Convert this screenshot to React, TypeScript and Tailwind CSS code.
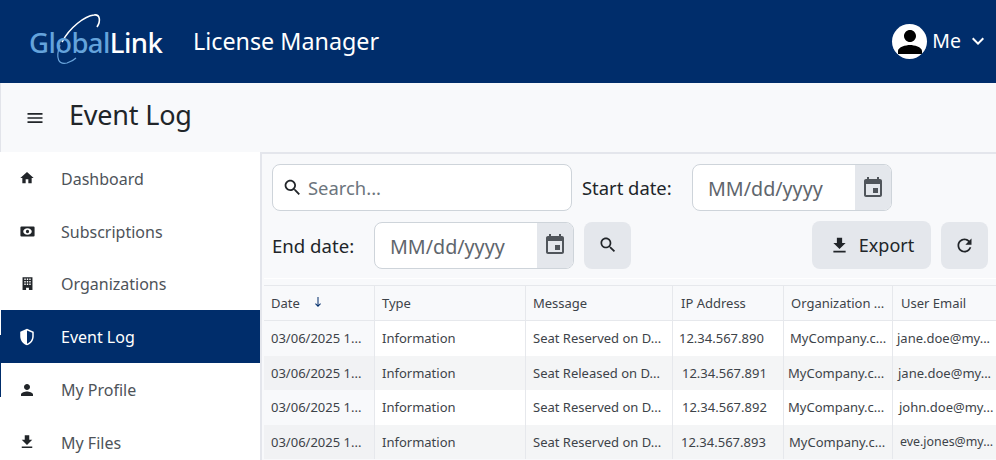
import type { ReactNode } from "react";

const Icon = ({ d, className }: { d: string; className: string }) => (
  <svg viewBox="0 0 24 24" fill="currentColor" fillRule="evenodd" className={className}>
    <path d={d} />
  </svg>
);

const icons = {
  home: "M10 20v-6h4v6h5v-8h3L12 3 2 12h3v8z",
  subs: "M3.5 5h17A1.5 1.5 0 0 1 22 6.5v11a1.5 1.5 0 0 1-1.5 1.5h-17A1.5 1.5 0 0 1 2 17.5v-11A1.5 1.5 0 0 1 3.5 5zM12 7.5c-3.3 0-6 2-6 4.5s2.700 4.500 6 4.500 6-2 6-4.500-2.700-4.500-6-4.500zM12 9.700a2.300 2.300 0 1 1 0 4.600 2.300 2.300 0 0 1 0-4.600z",
  org: "M5 3h14v18h-5v-3h-4v3H5V3zm2.500 2v2h2V5h-2zm3.500 0v2h2V5h-2zm3.500 0v2h2V5h-2zm-7 3.500v2h2v-2h-2zm3.500 0v2h2v-2h-2zm3.500 0v2h2v-2h-2zm-7 3.500v2h2v-2h-2zm3.500 0v2h2v-2h-2zm3.500 0v2h2v-2h-2z",
  shield:
    "M12 1L3 5v6c0 5.55 3.84 10.74 9 12 5.16-1.26 9-6.45 9-12V5l-9-4zm0 2.19l7 3.11V11c0 4.52-2.98 8.69-7 9.93V3.19z",
  person:
    "M12 12c2.21 0 4-1.79 4-4s-1.79-4-4-4-4 1.79-4 4 1.79 4 4 4zm0 2c-2.67 0-8 1.34-8 4v2h16v-2c0-2.66-5.33-4-8-4z",
  download: "M19 9h-4V3H9v6H5l7 7 7-7zM5 18v2h14v-2H5z",
  menu: "M3 18h18v-2H3v2zm0-5h18v-2H3v2zm0-7v2h18V6H3z",
  search:
    "M15.5 14h-.79l-.28-.27C15.41 12.59 16 11.11 16 9.5 16 5.91 13.09 3 9.5 3S3 5.91 3 9.5 5.91 16 9.5 16c1.61 0 3.09-.59 4.23-1.57l.27.28v.79l5 4.99L20.49 19l-4.99-5zm-6 0C7.01 14 5 11.99 5 9.5S7.01 5 9.5 5 14 7.01 14 9.5 11.99 14 9.5 14z",
  refresh:
    "M17.65 6.35C16.2 4.9 14.21 4 12 4c-4.42 0-7.99 3.58-7.99 8s3.57 8 7.99 8c3.73 0 6.84-2.55 7.73-6h-2.08c-.82 2.33-3.04 4-5.65 4-3.31 0-6-2.69-6-6s2.69-6 6-6c1.66 0 3.14.69 4.22 1.78L13 11h7V4l-2.35 2.35z",
  event:
    "M17 12h-5v5h5v-5zM16 1v2H8V1H6v2H5c-1.11 0-1.99.9-1.99 2L3 19c0 1.1.89 2 2 2h14c1.1 0 2-.9 2-2V5c0-1.1-.9-2-2-2h-1V1h-2zm3 18H5V8h14v11z",
  arrow: "M11 2h2v16l3.400-3.400L17.800 16 12 22l-5.800-6 1.400-1.400L11 18z",
  chevron: "M16.59 8.59L12 13.17 7.41 8.59 6 10l6 6 6-6z",
};

const navItems = [
  { label: "Dashboard", icon: icons.home, size: "h-[16px] w-[16px]" },
  { label: "Subscriptions", icon: icons.subs, size: "h-[17px] w-[17px]" },
  { label: "Organizations", icon: icons.org, size: "h-[17px] w-[17px]" },
  { label: "Event Log", icon: icons.shield, size: "h-[18px] w-[18px]", active: true },
  { label: "My Profile", icon: icons.person, size: "h-[18px] w-[18px]" },
  { label: "My Files", icon: icons.download, size: "h-[18px] w-[18px]" },
];

const rows = [
  { message: "Seat Reserved on D...", ip: "12.34.567.890", email: "jane.doe@my...", ipPad: "pl-[6px]", orgPad: "pl-[6px]", emailPad: "pl-[4px]" },
  { message: "Seat Released on D...", ip: "12.34.567.891", email: "jane.doe@my...", ipPad: "pl-[9px]", orgPad: "pl-[4px]", emailPad: "pl-[5px]" },
  { message: "Seat Reserved on D...", ip: "12.34.567.892", email: "john.doe@my...", ipPad: "pl-[9px]", orgPad: "pl-[4px]", emailPad: "pl-[6px]" },
  { message: "Seat Reserved on D...", ip: "12.34.567.893", email: "eve.jones@my...", ipPad: "pl-[8px]", orgPad: "pl-[5px]", emailPad: "pl-[7px] text-[12.4px]" },
];

const DateInput = () => (
  <div className="flex h-[47px] w-[200px] shrink-0 overflow-hidden rounded-lg border border-[#ced4da] bg-white">
    <span className="flex-1 pl-[15px] pt-[1px] text-[19.7px] leading-[45px] text-[#5f666d]">MM/dd/yyyy</span>
    <span className="flex w-[36px] items-center justify-center bg-[#e4e7ec] text-[#50555b]">
      <Icon d={icons.event} className="h-[24px] w-[24px]" />
    </span>
  </div>
);

const Th = ({ className, children }: { className: string; children: ReactNode }) => (
  <div className={`flex h-full shrink-0 items-center border-r border-[#e6e8ec] pt-[1px] text-[13px] text-[#3d4349] ${className}`}>
    {children}
  </div>
);

export default function App() {
  return (
    <div className="flex h-[460px] w-[996px] flex-col overflow-hidden bg-white font-['Noto_Sans','Open_Sans',sans-serif]">
      <header className="flex h-[83px] shrink-0 items-center bg-[#002d6b] pl-[29px] pr-[6px] text-white">
        <div className="relative w-[164px] pt-[3px]">
          <svg viewBox="0 0 55 60" fill="none" className="absolute left-[21px] top-[-10px] h-[60px] w-[55px]">
            <path d="M12 33C20 18 35 7 44 6C50 5 51 12 47 18" stroke="white" strokeWidth="1.6" />
            <path d="M10 36C5 50 9 56 17 54C20 53 24 51 26 49" stroke="#6aa5dc" strokeWidth="1.2" />
          </svg>
          <span className="relative text-[27.5px] font-medium tracking-[-0.6px] text-[#64a3dc]">
            Global<span className="text-white">Link</span>
          </span>
        </div>
        <span className="text-[23.3px] text-white">License Manager</span>
        <div className="ml-auto flex items-center">
          <span className="flex h-[35px] w-[35px] items-center justify-center overflow-hidden rounded-full bg-white text-black">
            <Icon d={icons.person} className="h-[36px] w-[36px] shrink-0" />
          </span>
          <span className="mb-[1px] ml-[5px] text-[19.5px]">Me</span>
          <Icon d={icons.chevron} className="mb-[2px] ml-[5px] h-[24px] w-[24px]" />
        </div>
      </header>

      <div className="flex h-[69px] shrink-0 items-center border-l border-[#e2e4ea] bg-[#f8f9fb] pl-[24px] text-[#212529]">
        <Icon d={icons.menu} className="h-[20px] w-[20px]" />
        <h1 className="mb-[4px] ml-[24px] text-[27px] tracking-[-0.2px]">Event Log</h1>
      </div>

      <div className="flex min-h-0 flex-1">
        <nav className="relative w-[260px] shrink-0">
          <div className="absolute left-0 top-[183px] h-[62px] w-px bg-[#002d6b]" />
          {navItems.map((item) => (
            <div
              key={item.label}
              className={`flex h-[52.8px] items-center text-[16px] ${
                item.active ? "ml-px bg-[#002d6b] pl-[17px] text-white" : "pl-[18px] text-[#4e5359]"
              }`}
            >
              <span className="flex w-[18px] justify-center">
                <Icon d={item.icon} className={`${item.size} ${item.active ? "text-white" : "text-[#212529]"}`} />
              </span>
              <span className="ml-[25px] pt-[1px]">{item.label}</span>
            </div>
          ))}
        </nav>

        <main className="min-w-0 flex-1 border-l-2 border-t-2 border-[#e4e6ec] bg-[#f8f9fb]">
          <div className="pl-[10px] pr-[8px] pt-[10px]">
            <div className="flex items-center">
              <div className="flex h-[47px] w-[300px] items-center rounded-lg border border-[#ced4da] bg-white pl-[9px]">
                <Icon d={icons.search} className="h-[21px] w-[21px] text-[#212529]" />
                <span className="ml-[5px] pt-[1px] text-[18.4px] text-[#6c757d]">Search...</span>
              </div>
              <span className="ml-[10px] w-[110px] pt-[1px] text-[18.4px] text-[#212529]">Start date:</span>
              <DateInput />
            </div>
            <div className="mt-[10px] flex items-center">
              <span className="w-[102px] pt-[1px] text-[18.6px] text-[#212529]">End date:</span>
              <DateInput />
              <button className="ml-[10px] flex h-[47px] w-[47px] items-center justify-center rounded-lg bg-[#e4e7ec] text-[#212529]">
                <Icon d={icons.search} className="h-[20px] w-[20px]" />
              </button>
              <button className="ml-auto flex h-[48px] w-[119px] items-center justify-center rounded-lg bg-[#e4e7ec] text-[18px] text-[#212529]">
                <Icon d={icons.download} className="mr-[9px] h-[21px] w-[21px]" />
                <span className="pt-[1px]">Export</span>
              </button>
              <button className="ml-[10px] flex h-[47px] w-[47px] items-center justify-center rounded-lg bg-[#e4e7ec] text-[#212529]">
                <Icon d={icons.refresh} className="h-[21px] w-[21px]" />
              </button>
            </div>
          </div>

          <div className="ml-[2px] mt-[9px] border-t border-white pt-[6px]">
            <div className="border-t border-[#e6e8ec] bg-white">
              <div className="flex h-[35px] border-b border-[#e6e8ec] bg-[#f8f9fb]">
                <Th className="w-[111px] pl-[7px]">
                  Date
                  <Icon d={icons.arrow} className="-mt-[3px] ml-[12px] h-[12px] w-[12px] text-[#002d6b]" />
                </Th>
                <Th className="w-[151px] pl-[7px]">Type</Th>
                <Th className="w-[147px] pl-[7px]">Message</Th>
                <Th className="w-[111px] pl-[8px]">IP Address</Th>
                <Th className="w-[109px] pl-[7px]">Organization ...</Th>
                <Th className="w-[103px] border-r-0 pl-[8px]">User Email</Th>
              </div>
              {rows.map((row, i) => (
                <div
                  key={row.ip}
                  className={`flex h-[34.5px] items-center whitespace-nowrap text-[13px] text-[#3d4349] ${i % 2 ? "bg-[#f4f5f6]" : "bg-white"}`}
                >
                  <div className={`flex h-full w-[111px] shrink-0 items-center border-r border-[#e6e8ec] pl-[7px] pt-[1px] ${i % 2 ? "bg-[#f1f2f4]" : "bg-[#f8f9fb]"}`}>
                    03/06/2025 1...
                  </div>
                  <div className="flex h-full w-[151px] shrink-0 items-center border-r border-[#e6e8ec] pl-[7px] pt-[1px]">Information</div>
                  <div className="flex h-full w-[147px] shrink-0 items-center border-r border-[#e6e8ec] pl-[7px] pt-[1px]">{row.message}</div>
                  <div className={`flex h-full w-[111px] shrink-0 items-center border-r border-[#e6e8ec] pt-[1px] ${row.ipPad}`}>{row.ip}</div>
                  <div className={`flex h-full w-[109px] shrink-0 items-center border-r border-[#e6e8ec] pt-[1px] ${row.orgPad}`}>MyCompany.c...</div>
                  <div className={`flex h-full w-[103px] shrink-0 items-center pt-[1px] ${row.emailPad}`}>{row.email}</div>
                </div>
              ))}
            </div>
          </div>
        </main>
      </div>
    </div>
  );
}
